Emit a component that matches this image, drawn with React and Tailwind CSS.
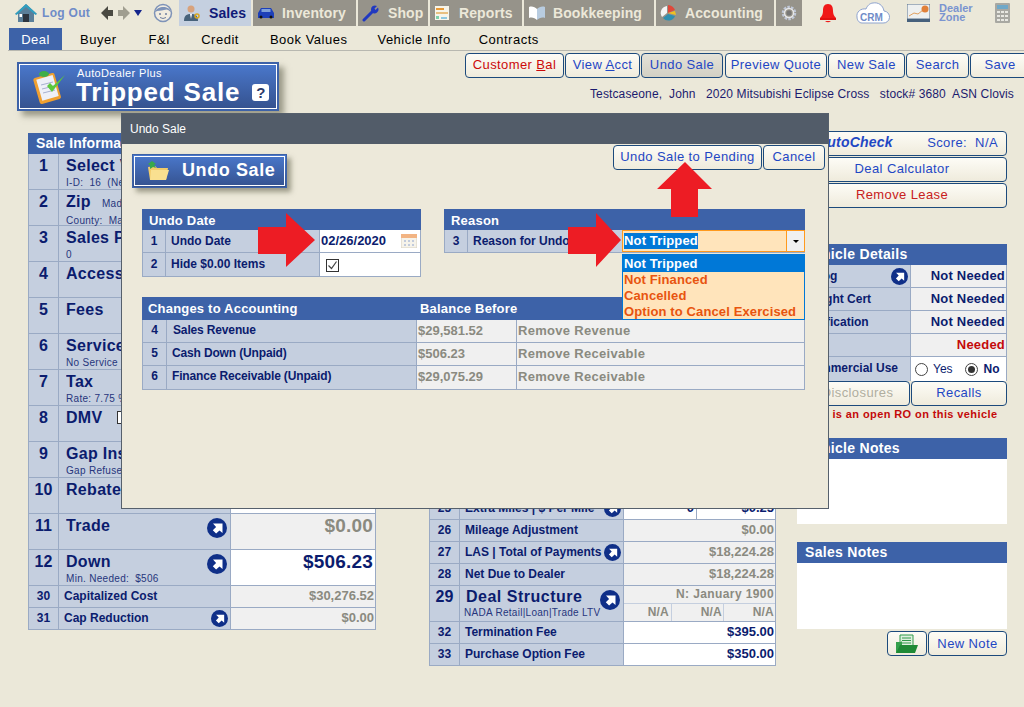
import React from "react";

const NAVY = "text-[#0b1c6e]";

function Badge({ size = 20 }) {
  return (
    <svg width={size} height={size} viewBox="0 0 20 20" className="shrink-0">
      <circle cx="10" cy="10" r="10" fill="#0f2f88" />
      <path d="M6 5.500h9.500V15l-3-2.600-3.400 3.200-3.300-3.300 3.300-3.400z" fill="#fff" />
    </svg>
  );
}

function Header({ children, className = "" }) {
  return (
    <div className={`bg-[#3d62a8] text-white font-bold flex items-center ${className}`}>
      {children}
    </div>
  );
}

// big row, 36px, left table
function BigRow({ n, label, sub, badge, value, white, gray, children }) {
  return (
    <div className="flex h-[36px] border-b border-[#9aaac4]">
      <div className={`w-[30px] shrink-0 bg-[#c5cfdf] border-r border-[#9aaac4] text-center text-[16px] leading-[23px] font-bold ${NAVY}`}>{n}</div>
      <div className="relative w-[172px] shrink-0 bg-[#c5cfdf] border-r border-[#9aaac4] pl-[7px] pt-[2px]">
        <div className={`text-[16px] leading-[20px] font-bold tracking-[0.3px] whitespace-nowrap overflow-hidden ${NAVY}`}>{label}{children}</div>
        {sub && <div className="mt-[1px] text-[10px] leading-[12px] tracking-[0.3px] text-[#26357c] whitespace-pre">{sub}</div>}
        {badge && <div className="absolute right-[3px] top-[4px]"><Badge /></div>}
      </div>
      <div className={`flex-1 text-right pr-[2px] text-[19px] leading-[24px] font-bold tracking-[0.2px] ${white ? "bg-white" : "bg-[#f0f0f0]"} ${gray ? "text-[#8a8a80]" : NAVY}`}>{value}</div>
    </div>
  );
}

function SmallRow({ n, label, value, badge, white, gray, labelW = "w-[172px]" }) {
  return (
    <div className="flex h-[22px] border-b border-[#9aaac4]">
      <div className={`w-[30px] shrink-0 bg-[#c5cfdf] border-r border-[#9aaac4] text-center text-[12px] leading-[20px] font-bold ${NAVY}`}>{n}</div>
      <div className={`relative ${labelW} shrink-0 bg-[#c5cfdf] border-r border-[#9aaac4] pl-[5px] text-[12px] leading-[20px] font-bold ${NAVY}`}>
        {label}
        {badge && <div className="absolute right-[2px] top-[2px]"><Badge size={17} /></div>}
      </div>
      <div className={`flex-1 text-right pr-[1px] text-[13px] leading-[20px] font-bold ${white ? "bg-white" : "bg-[#f0f0f0]"} ${gray ? "text-[#8a8a80]" : NAVY}`}>{value}</div>
    </div>
  );
}

function Btn({ children, className = "", pressed }) {
  return (
    <button className={`h-[25px] shrink-0 rounded-[4px] border border-[#1c4a7c] pb-[2px] text-[13px] tracking-[0.4px] text-[#1f47c4] ${pressed ? "bg-gradient-to-b from-[#e4e2d8] to-[#d2d0c4]" : "bg-gradient-to-b from-[#fdfcf6] to-[#efebdc]"} ${className}`}>
      {children}
    </button>
  );
}

function Tab({ w, icon, children, active }) {
  return (
    <div className={`h-[26px] shrink-0 flex items-center font-bold text-[14px] tracking-[0.1px] ${w} ${active ? "bg-[#c5d0e0] text-[#101a78]" : "bg-[#96938a] text-[#ece8d9]"}`}>
      {icon}
      {children}
    </div>
  );
}

function TopNav() {
  return (
    <div className="flex h-[26px] items-center">
      <svg width="24" height="20" viewBox="0 0 24 20" className="ml-[14px] shrink-0">
        <path d="M12 1 1 11h3v8h16v-8h3z" fill="#5a7f9a" />
        <path d="M12 1 1 11l1.500 1L12 4l9.500 8 1.500-1z" fill="#2f9fc0" />
        <rect x="9" y="11" width="6" height="8" fill="#2c3540" />
        <rect x="5.500" y="11" width="2.500" height="3" fill="#fff" />
      </svg>
      <span className="ml-[4px] text-[12px] font-bold tracking-[0.3px] text-[#6f8cc8] w-[50px] shrink-0">Log Out</span>
      <svg width="44" height="16" viewBox="0 0 44 16" className="ml-[8px] shrink-0">
        <path d="M1 8 8 1v4h5v6H8v4z" fill="#4a4a42" />
        <path d="M30 8 23 1v4h-5v6h5v4z" fill="#a09e90" />
        <path d="M34 5h8l-4 6z" fill="#14258c" />
      </svg>
      <svg width="20" height="20" viewBox="0 0 20 20" className="ml-[9px] shrink-0">
        <circle cx="10" cy="10" r="8.500" fill="#f1ece0" stroke="#7e93b8" strokeWidth="1.500" />
        <path d="M2 9c2-6 14-7 16 0-4-3-4-3-7-2-3 1-6 0-9 2z" fill="#7e93b8" />
        <circle cx="7" cy="11" r="1" fill="#6f7f9f" />
        <circle cx="13" cy="11" r="1" fill="#6f7f9f" />
        <path d="M7 14.500q3 2 6 0" fill="none" stroke="#6f7f9f" />
      </svg>
      <div className="ml-[6px] flex gap-[2px]">
        <Tab w="w-[72px]" active icon={
          <svg width="18" height="18" viewBox="0 0 18 18" className="ml-[4px] mr-[8px]">
            <circle cx="8" cy="5" r="3.500" fill="#d8a27c" />
            <path d="M1 17c0-6 3-7 7-7s7 1 7 7z" fill="#47627a" />
            <path d="M7 10h2l-1 5z" fill="#fff" />
            <circle cx="14" cy="12" r="2" fill="none" stroke="#d8a820" strokeWidth="1.500" />
          </svg>}>Sales</Tab>
        <Tab w="w-[103px]" icon={
          <svg width="18" height="12" viewBox="0 0 18 12" className="ml-[4px] mr-[7px]">
            <path d="M1 6l3-5h10l3 5v5H1z" fill="#1d3fb8" />
            <rect x="4.500" y="2" width="9" height="3" fill="#7fa0d8" />
            <circle cx="4" cy="10" r="1.500" fill="#111" />
            <circle cx="14" cy="10" r="1.500" fill="#111" />
          </svg>}>Inventory</Tab>
        <Tab w="w-[70px]" icon={
          <svg width="18" height="18" viewBox="0 0 18 18" className="ml-[4px] mr-[8px]">
            <path d="M2 16 11 7" stroke="#2038c0" strokeWidth="3" strokeLinecap="round" />
            <path d="M9 6a4 4 0 0 1 6-4l-2.500 2.500 1 1.500L16 3.500A4 4 0 0 1 10 8.500z" fill="#2038c0" />
          </svg>}>Shop</Tab>
        <Tab w="w-[92px]" icon={
          <svg width="14" height="14" viewBox="0 0 14 14" className="ml-[5px] mr-[10px]">
            <rect width="14" height="14" fill="#f7f5ea" />
            <rect x="1" y="2" width="8" height="2" fill="#e89a38" />
            <rect x="1" y="6" width="12" height="2" fill="#e8c080" />
            <rect x="1" y="10" width="3" height="3" fill="#7fd0a8" />
            <rect x="6" y="11" width="6" height="2" fill="#8fc8e0" />
          </svg>}>Reports</Tab>
        <Tab w="w-[130px]" icon={
          <svg width="16" height="14" viewBox="0 0 16 14" className="ml-[5px] mr-[8px]">
            <path d="M0 1c3-1 6 0 8 2v11c-2-2-5-3-8-2z" fill="#fff" />
            <path d="M16 1c-3-1-6 0-8 2v11c2-2 5-3 8-2z" fill="#b8cce0" />
          </svg>}>Bookkeeping</Tab>
        <Tab w="w-[118px]" icon={
          <svg width="16" height="16" viewBox="0 0 16 16" className="ml-[4px] mr-[9px]">
            <path d="M7 1v7l-5 4A7 7 0 0 1 7 1z" fill="#f4f4f4" />
            <path d="M8 0a8 8 0 0 1 7 5L8 8z" fill="#e0483a" />
            <path d="M15 6l1 4-8-2z" fill="#f0c020" />
            <path d="M15 11a7 7 0 0 1-12 2l5-4z" fill="#2f8fb0" />
          </svg>}>Accounting</Tab>
        <Tab w="w-[26px]" icon={
          <svg width="18" height="18" viewBox="0 0 18 18" className="ml-[4px]">
            <circle cx="9" cy="9" r="6" fill="none" stroke="#c0c8d8" strokeWidth="2.500" strokeDasharray="2.500 1.200" />
            <circle cx="9" cy="9" r="4.500" fill="none" stroke="#e8e8e8" strokeWidth="1.500" />
            <circle cx="9" cy="9" r="2.500" fill="#777" />
          </svg>} />
      </div>
      <svg width="18" height="20" viewBox="0 0 18 20" className="ml-[17px] shrink-0">
        <path d="M9 1c-4 0-5 3-5 7 0 3-1 5-3 7h16c-2-2-3-4-3-7 0-4-1-7-5-7z" fill="#f01818" />
        <rect x="1" y="15" width="16" height="2" fill="#e01010" />
        <path d="M6 18h6q-3 2.500-6 0z" fill="#f01818" />
      </svg>
      <div className="relative ml-[17px] w-[35px] h-[24px] shrink-0 flex items-end justify-center">
        <svg width="36" height="24" viewBox="0 0 36 24" className="absolute left-0 top-0">
          <path d="M8 22h21a6 6 0 0 0 1-12C29 4 24 1 19 2c-3 0-6 3-7 6-5-1-10 3-9 8 0 3 2 6 5 6z" fill="#fff" stroke="#8fa4cf" />
        </svg>
        <span className="relative text-[10px] leading-[14px] font-bold text-[#6f8cc8]">CRM</span>
      </div>
      <svg width="23" height="18" viewBox="0 0 23 18" className="ml-[18px] shrink-0">
        <rect width="23" height="15" fill="#eef0f0" stroke="#58708c" />
        <rect y="15" width="23" height="3" fill="#46607c" />
        <path d="M2 12l5-3 4 1 5-4" fill="none" stroke="#e0a060" />
        <circle cx="18" cy="5" r="3.500" fill="#e0803a" />
      </svg>
      <div className="ml-[9px] w-[36px] shrink-0 text-[11px] leading-[9px] font-bold text-[#7a94d0]">
        <div>Dealer</div>
        <div>Zone</div>
      </div>
      <svg width="15" height="20" viewBox="0 0 15 20" className="ml-[20px] shrink-0">
        <rect width="15" height="20" rx="1" fill="#a8a8a2" />
        <rect x="2" y="2" width="11" height="4" fill="#6fa8c8" />
        <path d="M2 8h3v2H2zM6 8h3v2H6zM10 8h3v2h-3zM2 12h3v2H2zM6 12h3v2H6zM10 12h3v2h-3zM2 16h3v2H2zM6 16h3v2H6zM10 16h3v2h-3z" fill="#e8e8e2" />
      </svg>
    </div>
  );
}

function SubNav() {
  const items = [
    ["Buyer", "ml-[18px]"],
    ["F&I", "ml-[32px]"],
    ["Credit", "ml-[31px]"],
    ["Book Values", "ml-[31px]"],
    ["Vehicle Info", "ml-[30px]"],
    ["Contracts", "ml-[28px]"],
  ];
  return (
    <div className="mt-[2px] ml-[8px] h-[23px] flex border-b border-[#b8b8b0]">
      <div className="w-[53px] h-[22px] ml-[1px] bg-[#3d62a8] text-white text-[13px] leading-[24px] tracking-[0.5px] text-center">Deal</div>
      {items.map(([t, m]) => (
        <span key={t} className={`${m} text-[13px] leading-[24px] tracking-[0.5px] text-black`}>{t}</span>
      ))}
    </div>
  );
}

function Banner() {
  return (
    <div className="mt-[11px] ml-[17px] w-[262px] h-[49px] shrink-0 border-[2px] border-[#3d62a8] bg-gradient-to-b from-[#4a78cc] to-[#35528f] shadow-[5px_5px_6px_rgba(90,90,70,0.55)]">
      <div className="h-full border border-white flex items-center">
        <svg width="38" height="38" viewBox="0 0 38 38" className="ml-[11px] shrink-0">
          <rect x="5" y="7" width="22" height="27" rx="2" transform="rotate(-16 16 20)" fill="#f0a030" />
          <rect x="8" y="9" width="17" height="22" transform="rotate(-16 16 20)" fill="#eef0f8" />
          <path d="M10 17l12-3M11 21l12-3M12 25l12-3" stroke="#a8b0d0" />
          <ellipse cx="13" cy="6" rx="5" ry="3" fill="#3fae48" />
          <path d="M16 18l5 6L34 7l-12 11-3-3z" fill="#5cc83c" />
        </svg>
        <div className="ml-[7px] flex-1 text-white">
          <div className="pl-[1px] text-[11px] leading-[11px] tracking-[0.35px]">AutoDealer Plus</div>
          <div className="flex items-center">
            <span className="text-[26px] leading-[26px] font-bold tracking-[0.8px] whitespace-nowrap">Tripped Sale</span>
            <span className="ml-[12px] w-[17px] h-[17px] rounded-[3px] bg-white text-[#2a3a6a] text-[15px] leading-[17px] font-bold text-center">?</span>
          </div>
        </div>
      </div>
    </div>
  );
}

function Toolbar() {
  return (
    <div className="ml-[186px] mt-[2px]">
      <div className="flex gap-[1px] w-[600px]">
        <Btn className="w-[99px] !text-[#cc0a0a]">Customer <u>B</u>al</Btn>
        <Btn className="w-[75px]">View <u>A</u>cct</Btn>
        <Btn pressed className="w-[82px]">Undo Sale</Btn>
        <Btn className="w-[102px] ml-[1px]">Preview Quote</Btn>
        <Btn className="w-[77px]">New Sale</Btn>
        <Btn className="w-[63px]">Search</Btn>
        <Btn className="w-[60px]">Save</Btn>
      </div>
      <div className="mt-[7px] w-[549px] text-right text-[12px] tracking-[0.12px] leading-[18px] text-[#1b1b6e] whitespace-pre">
        Testcaseone,  John   2020 Mitsubishi Eclipse Cross   stock# 3680  ASN Clovis
      </div>
    </div>
  );
}

function LeftTable() {
  return (
    <div className="ml-[28px] w-[348px] shrink-0">
      <Header className="h-[21px] pl-[8px] text-[14px] tracking-[0.1px]">Sale Information</Header>
      <div className="border-l border-r border-[#9aaac4]">
        <BigRow n="1" label="Select Vehicle" sub="I-D:  16  (New)" />
        <BigRow n="2" label="Zip" sub="County:  Madera">
          <span className="ml-[11px] text-[10px] font-normal tracking-[0.3px] text-[#26357c]">Madera</span>
        </BigRow>
        <BigRow n="3" label="Sales Price" sub="0" />
        <BigRow n="4" label="Accessories" />
        <BigRow n="5" label="Fees" />
        <BigRow n="6" label="Service Contract" sub="No Service" />
        <BigRow n="7" label="Tax" sub="Rate: 7.75 %" />
        <BigRow n="8" label="DMV">
          <span className="ml-[15px] inline-block w-[13px] h-[13px] align-[-1px] bg-white border border-[#333]" />
        </BigRow>
        <BigRow n="9" label="Gap Insurance" sub="Gap Refused" />
        <BigRow n="10" label="Rebate" white />
        <BigRow n="11" label="Trade" badge value="$0.00" gray />
        <BigRow n="12" label="Down" sub="Min. Needed:  $506" badge value="$506.23" white />
        <SmallRow n="30" label="Capitalized Cost" value="$30,276.52" gray />
        <SmallRow n="31" label="Cap Reduction" value="$0.00" badge gray />
      </div>
    </div>
  );
}

function MiddleTable() {
  return (
    <div className="ml-[53px] w-[347px] shrink-0 pt-[365px]">
      <div className="border-l border-r border-[#9aaac4]">
        <div className="flex h-[22px] border-b border-[#9aaac4]">
          <div className={`w-[30px] bg-[#c5cfdf] border-r border-[#9aaac4] text-center text-[12px] leading-[21px] font-bold ${NAVY}`}>25</div>
          <div className={`relative w-[164px] bg-[#c5cfdf] border-r border-[#9aaac4] pl-[5px] text-[12px] leading-[21px] font-bold ${NAVY}`}>
            Extra Miles | $ Per Mile
            <div className="absolute right-[2px] top-[2px]"><Badge size={17} /></div>
          </div>
          <div className={`w-[73px] bg-white border-r border-[#9aaac4] text-right pr-[2px] text-[13px] leading-[20px] font-bold ${NAVY}`}>0</div>
          <div className={`flex-1 bg-white text-right pr-[1px] text-[13px] leading-[20px] font-bold ${NAVY}`}>$0.25</div>
        </div>
        <SmallRow n="26" label="Mileage Adjustment" value="$0.00" gray labelW="w-[164px]" />
        <SmallRow n="27" label="LAS | Total of Payments" value="$18,224.28" gray badge labelW="w-[164px]" />
        <SmallRow n="28" label="Net Due to Dealer" value="$18,224.28" gray labelW="w-[164px]" />
        <div className="flex h-[36px] border-b border-[#9aaac4]">
          <div className={`w-[30px] bg-[#c5cfdf] border-r border-[#9aaac4] text-center text-[16px] leading-[22px] font-bold ${NAVY}`}>29</div>
          <div className="relative w-[164px] bg-[#c5cfdf] border-r border-[#9aaac4] pl-[5px]">
            <div className={`ml-[1px] text-[16px] leading-[21px] font-bold tracking-[0.5px] ${NAVY}`}>Deal Structure</div>
            <div className="ml-[-1px] text-[10px] leading-[12px] tracking-[0.28px] text-[#26357c] whitespace-nowrap">NADA Retail|Loan|Trade LTV</div>
            <div className="absolute right-[3px] top-[4px]"><Badge /></div>
          </div>
          <div className="flex-1 bg-[#f0f0f0] text-[#8a8a80] text-[12px] font-bold">
            <div className="h-[18px] border-b border-[#c5cfdf] text-right pr-[1px] leading-[16px] tracking-[0.4px]">N: January 1900</div>
            <div className="flex h-[17px] leading-[17px] tracking-[0.2px]">
              <div className="w-[48px] border-r border-[#c5cfdf] text-right pr-[2px]">N/A</div>
              <div className="w-[52px] border-r border-[#c5cfdf] text-right pr-[1px]">N/A</div>
              <div className="flex-1 text-right pr-[1px]">N/A</div>
            </div>
          </div>
        </div>
        <SmallRow n="32" label="Termination Fee" value="$395.00" white labelW="w-[164px]" />
        <SmallRow n="33" label="Purchase Option Fee" value="$350.00" white labelW="w-[164px]" />
      </div>
    </div>
  );
}

function DetailRow({ label, badge, value, red }) {
  return (
    <div className="flex h-[23px] border-b border-[#9aaac4]">
      <div className={`relative w-[113px] bg-[#c5cfdf] border-r border-[#9aaac4] pl-[6px] text-[12px] leading-[22px] font-bold ${NAVY}`}>
        {label}
        {badge && <div className="absolute right-[2px] top-[3px]"><Badge size={17} /></div>}
      </div>
      <div className={`flex-1 bg-[#f0f0f0] text-right pr-[1px] text-[13px] leading-[21px] font-bold tracking-[0.2px] ${red ? "text-[#c40a0a]" : NAVY}`}>{value}</div>
    </div>
  );
}

function RightColumn() {
  return (
    <div className="ml-[21px] w-[210px] shrink-0 -mt-[2px]">
      <div className="flex flex-col gap-[1px]">
        <Btn className="w-[210px] flex items-center justify-between pl-[19px] pr-[8px]">
          <span className="font-bold italic text-[14px] tracking-[0.2px]">AutoCheck</span>
          <span className="whitespace-pre">Score:  N/A</span>
        </Btn>
        <Btn className="w-[210px]">Deal Calculator</Btn>
        <Btn className="w-[210px] !text-[#c82020]">Remove Lease</Btn>
      </div>
      <Header className="mt-[36px] h-[21px] pl-[8px] text-[14px] tracking-[0.3px]">Vehicle Details</Header>
      <div className="border-l border-r border-[#9aaac4]">
        <DetailRow label="Smog" badge value="Not Needed" />
        <DetailRow label="Weight Cert" value="Not Needed" />
        <DetailRow label="Verification" value="Not Needed" />
        <DetailRow label="Title" value="Needed" red />
        <div className="flex h-[24px]">
          <div className={`w-[113px] bg-[#c5cfdf] border-r border-[#9aaac4] pl-[6px] text-[12px] leading-[22px] font-bold whitespace-nowrap ${NAVY}`}>Commercial Use</div>
          <div className={`flex-1 bg-white flex items-center pl-[4px] text-[12px] ${NAVY}`}>
            <span className="w-[13px] h-[13px] rounded-full border border-[#444] bg-white" />
            <span className="ml-[5px]">Yes</span>
            <span className="ml-[12px] w-[13px] h-[13px] rounded-full border border-[#444] bg-white flex items-center justify-center">
              <span className="w-[7px] h-[7px] rounded-full bg-[#333]" />
            </span>
            <span className="ml-[6px] font-bold">No</span>
          </div>
        </div>
      </div>
      <div className="flex gap-[1px]">
        <Btn className="w-[113px] pl-[8px] !text-[#b0ae9f]">Disclosures</Btn>
        <Btn className="w-[96px]">Recalls</Btn>
      </div>
      <div className="mt-[1px] text-[11px] leading-[14px] tracking-[0.4px] font-bold text-[#c40a0a] whitespace-nowrap">There is an open RO on this vehicle</div>
      <Header className="mt-[17px] h-[21px] pl-[8px] text-[14px] tracking-[0.3px]">Vehicle Notes</Header>
      <div className="h-[65px] bg-white" />
      <Header className="mt-[18px] h-[21px] pl-[8px] text-[14px] tracking-[0.3px]">Sales Notes</Header>
      <div className="h-[66px] bg-white" />
      <div className="mt-[2px] flex justify-end gap-[1px]">
        <button className="w-[40px] h-[25px] rounded-[4px] border border-[#1c4a7c] bg-gradient-to-b from-[#fdfcf6] to-[#efebdc] flex items-center justify-center">
          <svg width="22" height="20" viewBox="0 0 22 20">
            <path d="M4 1h13v12H4z" fill="#dff0df" stroke="#2f9a4a" />
            <path d="M6 4h9M6 6.500h9M6 9h9" stroke="#2f9a4a" />
            <path d="M0 8h5l1-1v12H0z" fill="#35a04c" />
            <path d="M4 11h18l-3 8H0z" fill="#1f8a36" />
          </svg>
        </button>
        <Btn className="w-[79px] !pb-0">New Note</Btn>
      </div>
    </div>
  );
}

function RedArrow({ className, w, h, points }) {
  return (
    <svg width={w} height={h} viewBox={`0 0 ${w} ${h}`} className={`absolute ${className}`}>
      <polygon points={points} fill="#ed1c24" />
    </svg>
  );
}

function ModalRow({ n, label, numW, labelW, last, tall, children }) {
  const lh = tall ? "leading-[22px]" : "leading-[21px]";
  return (
    <div className={`flex h-[23px] ${last ? "" : "border-b border-[#9aaac4]"}`}>
      <div className={`${numW} ${lh} shrink-0 bg-[#c5cfdf] border-r border-[#9aaac4] text-center text-[12px] font-bold ${NAVY}`}>{n}</div>
      <div className={`${labelW} ${lh} shrink-0 bg-[#c5cfdf] border-r border-[#9aaac4] pl-[5px] text-[12px] font-bold ${NAVY}`}>{label}</div>
      {children}
    </div>
  );
}

function ChangesRow({ n, label, bal, action, last }) {
  return (
    <ModalRow n={n} label={<span className="tracking-[-0.15px]">{label}</span>} numW="w-[24px]" labelW="w-[250px]" last={last}>
      <div className="w-[100px] bg-[#f0f0f0] border-r border-[#9aaac4] pl-[1px] text-[13px] leading-[21px] font-bold text-[#8a8a80]">{bal}</div>
      <div className="flex-1 bg-[#f0f0f0] pl-[1px] text-[13px] leading-[21px] font-bold tracking-[0.3px] text-[#8a8a80]">{action}</div>
    </ModalRow>
  );
}

function UndoModal() {
  return (
    <div className="absolute left-[121px] top-[113px] w-[708px] h-[396px] border border-[#56606c] bg-[#ede9da]">
      <div className="h-[30px] bg-[#525c69] text-white text-[12px] leading-[30px] pl-[8px]">Undo Sale</div>
      <div className="flex">
        <div className="mt-[10px] ml-[10px] w-[155px] h-[34px] border border-[#3d62a8] bg-gradient-to-b from-[#4a78cc] to-[#35528f] shadow-[4px_4px_5px_rgba(90,90,70,0.55)]">
          <div className="m-[1px] h-[30px] border border-white flex items-center">
            <svg width="24" height="22" viewBox="0 0 24 22" className="ml-[12px] shrink-0">
              <path d="M1 7l7-1 2 2h11l-2 12H3z" fill="#f2cb68" />
              <path d="M4 10h18l-3 10H3z" fill="#f9e090" />
              <path d="M5 1l4 3-2 1 2 3-3-1-3 2V5L1 4z" fill="#38a84a" />
            </svg>
            <span className="ml-[11px] pb-[2px] text-[18px] font-bold tracking-[0.6px] text-white">Undo Sale</span>
          </div>
        </div>
        <div className="ml-auto mr-[3px] mt-[1px] flex gap-[1px]">
          <Btn className="w-[149px]">Undo Sale to Pending</Btn>
          <Btn className="w-[62px]">Cancel</Btn>
        </div>
      </div>
      <div className="mt-[21px] ml-[20px] flex">
        <div className="w-[279px]">
          <Header className="h-[21px] pl-[7px] pt-[2px] text-[13px] tracking-[0.2px]">Undo Date</Header>
          <div className="border-l border-r border-b border-[#9aaac4]">
            <ModalRow tall n="1" label="Undo Date" numW="w-[23px]" labelW="w-[154px]">
              <div className={`flex-1 bg-white flex items-center pl-[1px] text-[13px] font-bold ${NAVY}`}>
                02/26/2020
                <svg width="16" height="14" viewBox="0 0 16 14" className="ml-[15px]">
                  <rect width="16" height="14" rx="1" fill="#f6f3ea" stroke="#d8d0c0" />
                  <rect width="16" height="4" fill="#f2b483" />
                  <path d="M3 6h2v2H3zM7 6h2v2H7zM11 6h2v2h-2zM3 10h2v2H3zM7 10h2v2H7zM11 10h2v2h-2z" fill="#c2cbdc" />
                </svg>
              </div>
            </ModalRow>
            <ModalRow tall n="2" label="Hide $0.00 Items" numW="w-[23px]" labelW="w-[154px]" last>
              <div className="flex-1 bg-white pl-[6px] pt-[6px]">
                <div className="w-[13px] h-[13px] border border-[#333] flex items-center justify-center">
                  <svg width="11" height="11" viewBox="0 0 11 11">
                    <path d="M1.500 5.500l3 3 5-7" fill="none" stroke="#444" strokeWidth="1.200" />
                  </svg>
                </div>
              </div>
            </ModalRow>
          </div>
        </div>
        <div className="ml-[23px] w-[361px]">
          <Header className="h-[21px] pl-[7px] pt-[2px] text-[13px] tracking-[0.2px]">Reason</Header>
          <div className="relative flex h-[23px] border-l border-b border-[#9aaac4]">
            <div className={`w-[23px] shrink-0 bg-[#c5cfdf] border-r border-[#9aaac4] text-center text-[12px] leading-[22px] font-bold ${NAVY}`}>3</div>
            <div className={`w-[154px] shrink-0 bg-[#c5cfdf] pl-[5px] text-[12px] leading-[22px] font-bold ${NAVY}`}>Reason for Undo</div>
            <div className="flex-1 flex border border-[#ff9a1e] bg-[#ffe4bb]">
              <div className="flex-1 pl-[1px] pt-[2px] leading-[16px] flex items-start">
                <span className="bg-[#0078d7] text-white text-[13px] leading-[16px] font-bold tracking-[0.15px]">Not Tripped</span>
              </div>
              <div className="w-[18px] bg-[#f0f0f0] border-l border-[#ff9a1e] flex items-center justify-center">
                <span className="w-0 h-0 border-l-[3px] border-r-[3px] border-t-[3px] border-l-transparent border-r-transparent border-t-black" />
              </div>
            </div>
            <div className="absolute left-[177px] top-[24px] w-[183px] h-[66px] border border-[#0078d7] bg-[#ffe4bb] text-[13px] leading-[16px] font-bold tracking-[0.12px] text-[#e8540f] whitespace-nowrap z-10">
              <div className="bg-[#0078d7] text-white pl-[1px] h-[17px] leading-[17px]">Not Tripped</div>
              <div className="pl-[1px]">Not Financed</div>
              <div className="pl-[1px]">Cancelled</div>
              <div className="pl-[1px]">Option to Cancel Exercised</div>
            </div>
          </div>
        </div>
      </div>
      <div className="mt-[20px] ml-[20px] w-[663px]">
        <Header className="h-[23px] text-[13px] tracking-[0.2px]">
          <span className="pl-[6px] w-[278px]">Changes to Accounting</span>
          <span>Balance Before</span>
        </Header>
        <div className="border-l border-r border-b border-[#9aaac4]">
          <ChangesRow n="4" label={<span className="pl-[1px]">Sales Revenue</span>} bal="$29,581.52" action="Remove Revenue" />
          <ChangesRow n="5" label="Cash Down (Unpaid)" bal="$506.23" action="Remove Receivable" />
          <ChangesRow n="6" label="Finance Receivable (Unpaid)" bal="$29,075.29" action="Remove Receivable" last />
        </div>
      </div>
      <RedArrow className="left-[136px] top-[99px]" w={58} h={55} points="0,14 28,14 28,0 57,27 28,54 28,41 0,41" />
      <RedArrow className="left-[446px] top-[99px]" w={54} h={55} points="0,14 28,14 28,0 53,27 28,54 28,41 0,41" />
      <RedArrow className="left-[535px] top-[48px]" w={55} h={56} points="28,0 55,27 41,27 41,55 14,55 14,27 0,27" />
    </div>
  );
}

export default function App() {
  return (
    <div className="relative w-[1024px] h-[707px] overflow-hidden bg-[#ebe8d9] [font-family:Liberation_Sans,Arial,sans-serif]">
      <TopNav />
      <SubNav />
      <div className="flex h-[82px]">
        <Banner />
        <Toolbar />
      </div>
      <div className="flex">
        <LeftTable />
        <MiddleTable />
        <RightColumn />
      </div>
      <UndoModal />
    </div>
  );
}
